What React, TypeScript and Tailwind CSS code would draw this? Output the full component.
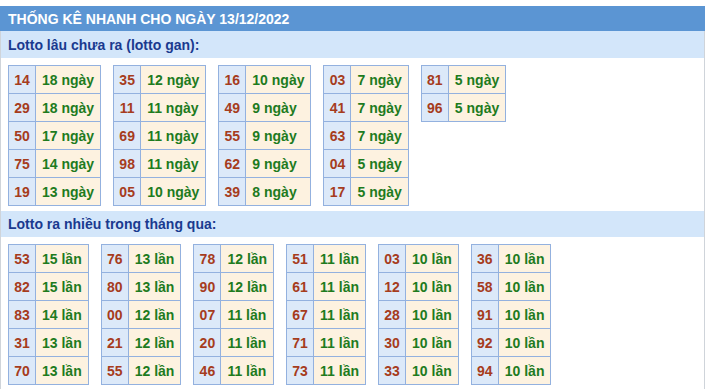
import React from "react";

type Item = [string, string];

const gan: Item[][] = [
  [["14", "18"], ["29", "18"], ["50", "17"], ["75", "14"], ["19", "13"]],
  [["35", "12"], ["11", "11"], ["69", "11"], ["98", "11"], ["05", "10"]],
  [["16", "10"], ["49", "9"], ["55", "9"], ["62", "9"], ["39", "8"]],
  [["03", "7"], ["41", "7"], ["63", "7"], ["04", "5"], ["17", "5"]],
  [["81", "5"], ["96", "5"]],
];

const nhieu: Item[][] = [
  [["53", "15"], ["82", "15"], ["83", "14"], ["31", "13"], ["70", "13"]],
  [["76", "13"], ["80", "13"], ["00", "12"], ["21", "12"], ["55", "12"]],
  [["78", "12"], ["90", "12"], ["07", "11"], ["20", "11"], ["46", "11"]],
  [["51", "11"], ["61", "11"], ["67", "11"], ["71", "11"], ["73", "11"]],
  [["03", "10"], ["12", "10"], ["28", "10"], ["30", "10"], ["33", "10"]],
  [["36", "10"], ["58", "10"], ["91", "10"], ["92", "10"], ["94", "10"]],
];

function Table({ items, unit }: { items: Item[]; unit: string }) {
  return (
    <div className="grid grid-cols-[auto_auto] self-start border-t border-l border-[#93b1df]">
      {items.map(([n, v], i) => (
        <React.Fragment key={i}>
          <div className="h-[28px] w-[27px] flex items-center justify-center bg-[#dce9f9] border-r border-b border-[#93b1df] text-[#a63c1d]">
            {n}
          </div>
          <div className="h-[28px] px-[6px] flex items-center justify-start bg-[#fdf2e0] border-r border-b border-[#93b1df] text-[#1e7b1e] whitespace-nowrap">
            {v} {unit}
          </div>
        </React.Fragment>
      ))}
    </div>
  );
}

export default function App() {
  return (
    <div
      className="w-[705px] bg-white text-[14px] font-bold leading-[16px]"
      style={{ fontFamily: '"Liberation Sans", Arial, sans-serif' }}
    >
      <div className="h-[6px]" />
      <div className="h-[25px] bg-[#5b95d3] text-white flex items-center pl-[8px]">
        THỐNG KÊ NHANH CHO NGÀY 13/12/2022
      </div>
      <div className="border-l border-r border-[#cfd4da]">
        <div className="h-[27px] bg-[#d3e6fa] text-[#1a3a8f] flex items-center pl-[7px]">
          Lotto lâu chưa ra (lotto gan):
        </div>
        <div className="flex gap-[12px] px-[7px] pt-[7px] pb-[5px]">
          {gan.map((t, i) => (
            <Table key={i} items={t} unit="ngày" />
          ))}
        </div>
        <div className="h-[26px] bg-[#d3e6fa] text-[#1a3a8f] flex items-center pl-[7px]">
          Lotto ra nhiều trong tháng qua:
        </div>
        <div className="flex gap-[12px] px-[7px] pt-[7px] pb-[5px]">
          {nhieu.map((t, i) => (
            <Table key={i} items={t} unit="lần" />
          ))}
        </div>
      </div>
    </div>
  );
}
